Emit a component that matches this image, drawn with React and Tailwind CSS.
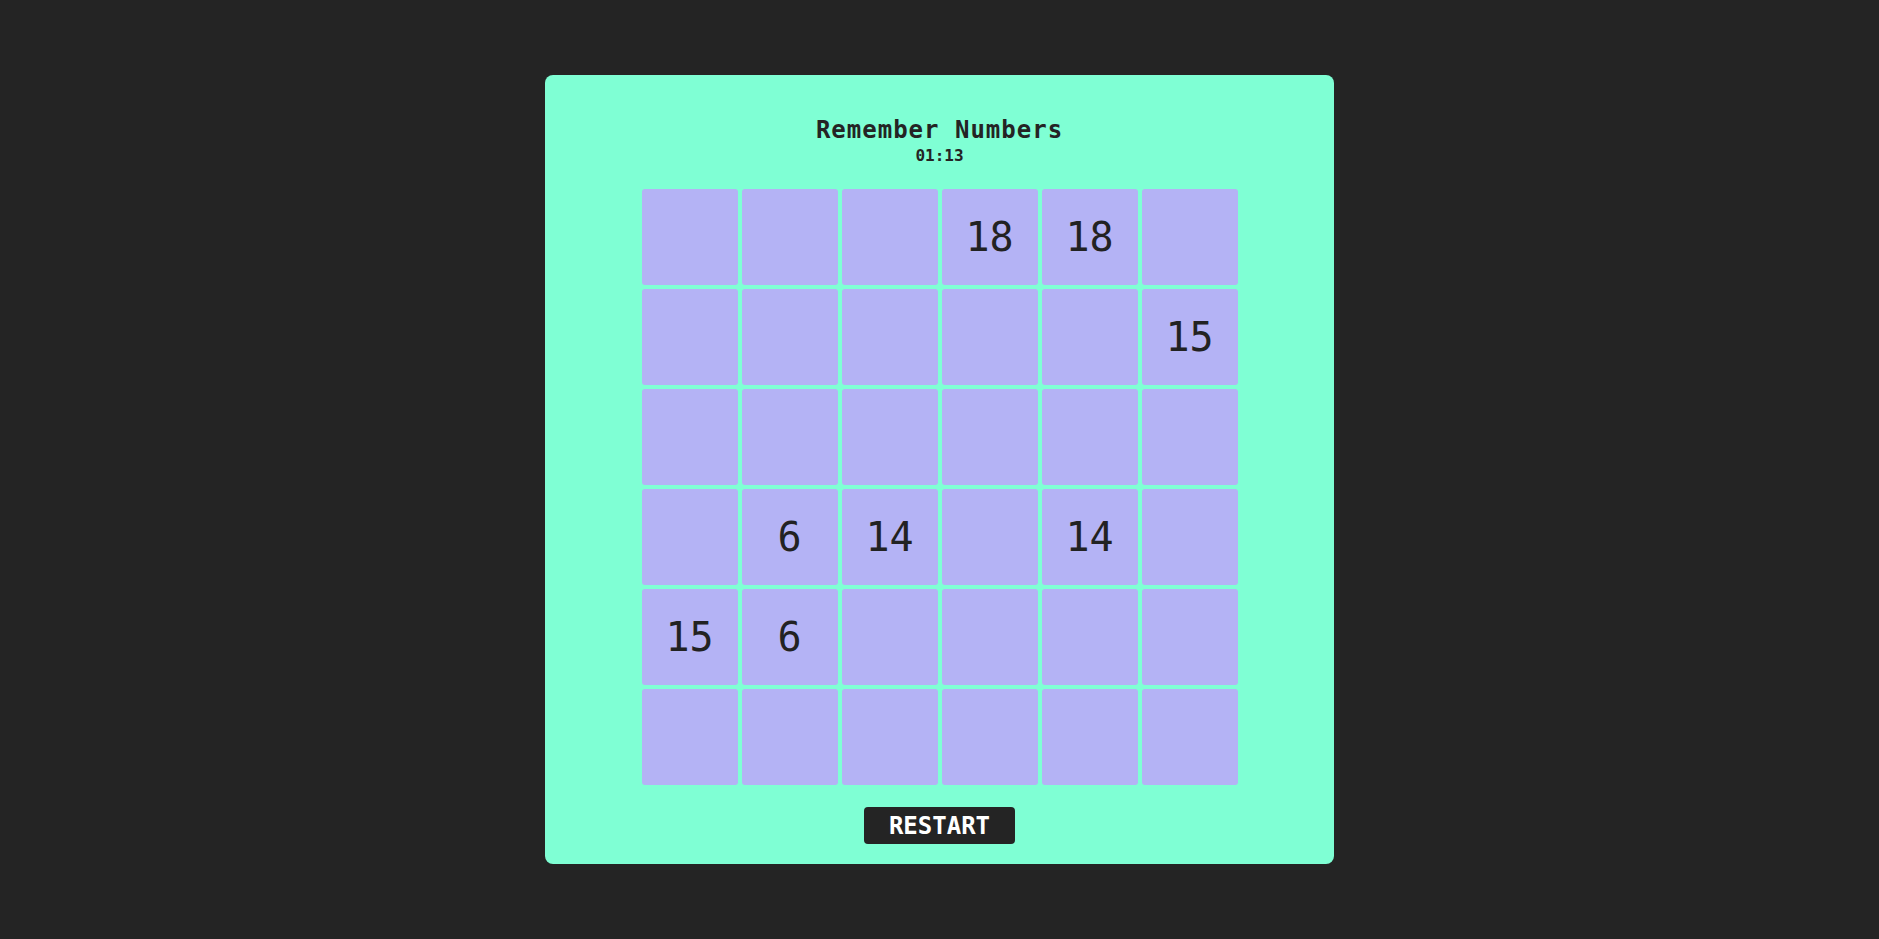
import React, { useState } from "react";

const board = [
  [null, null, null, 18, 18, null],
  [null, null, null, null, null, 15],
  [null, null, null, null, null, null],
  [null, 6, 14, null, 14, null],
  [15, 6, null, null, null, null],
  [null, null, null, null, null, null],
];

const Tile = ({ value }) => (
  <div className="w-[96px] h-[96px] rounded-[3px] bg-[#b4b3f5] flex items-center justify-center text-[40px] leading-none text-[#222222]">
    {value ?? ""}
  </div>
);

const App = () => {
  const [time] = useState("01:13");

  return (
    <div
      className="w-full h-screen bg-[#242424] flex items-center justify-center"
      style={{ fontFamily: '"DejaVu Sans Mono", monospace' }}
    >
      {/* game card */}
      <div className="w-[789px] h-[789px] bg-[#7fffd4] rounded-[8px] flex flex-col items-center pt-[40px]">
        <h1 className="text-[24px] leading-[31px] font-bold tracking-[1px] text-[#242424]">
          Remember Numbers
        </h1>
        <div className="text-[16px] leading-[19px] font-bold text-[#242424]">{time}</div>

        <div className="mt-[24px] grid grid-cols-6 gap-[4px]">
          {board.flat().map((v, i) => (
            <Tile key={i} value={v} />
          ))}
        </div>

        <button className="mt-[22px] w-[151px] h-[37px] rounded-[4px] bg-[#242424] text-white text-[24px] leading-none font-bold">
          RESTART
        </button>
      </div>
    </div>
  );
};

export default App;
